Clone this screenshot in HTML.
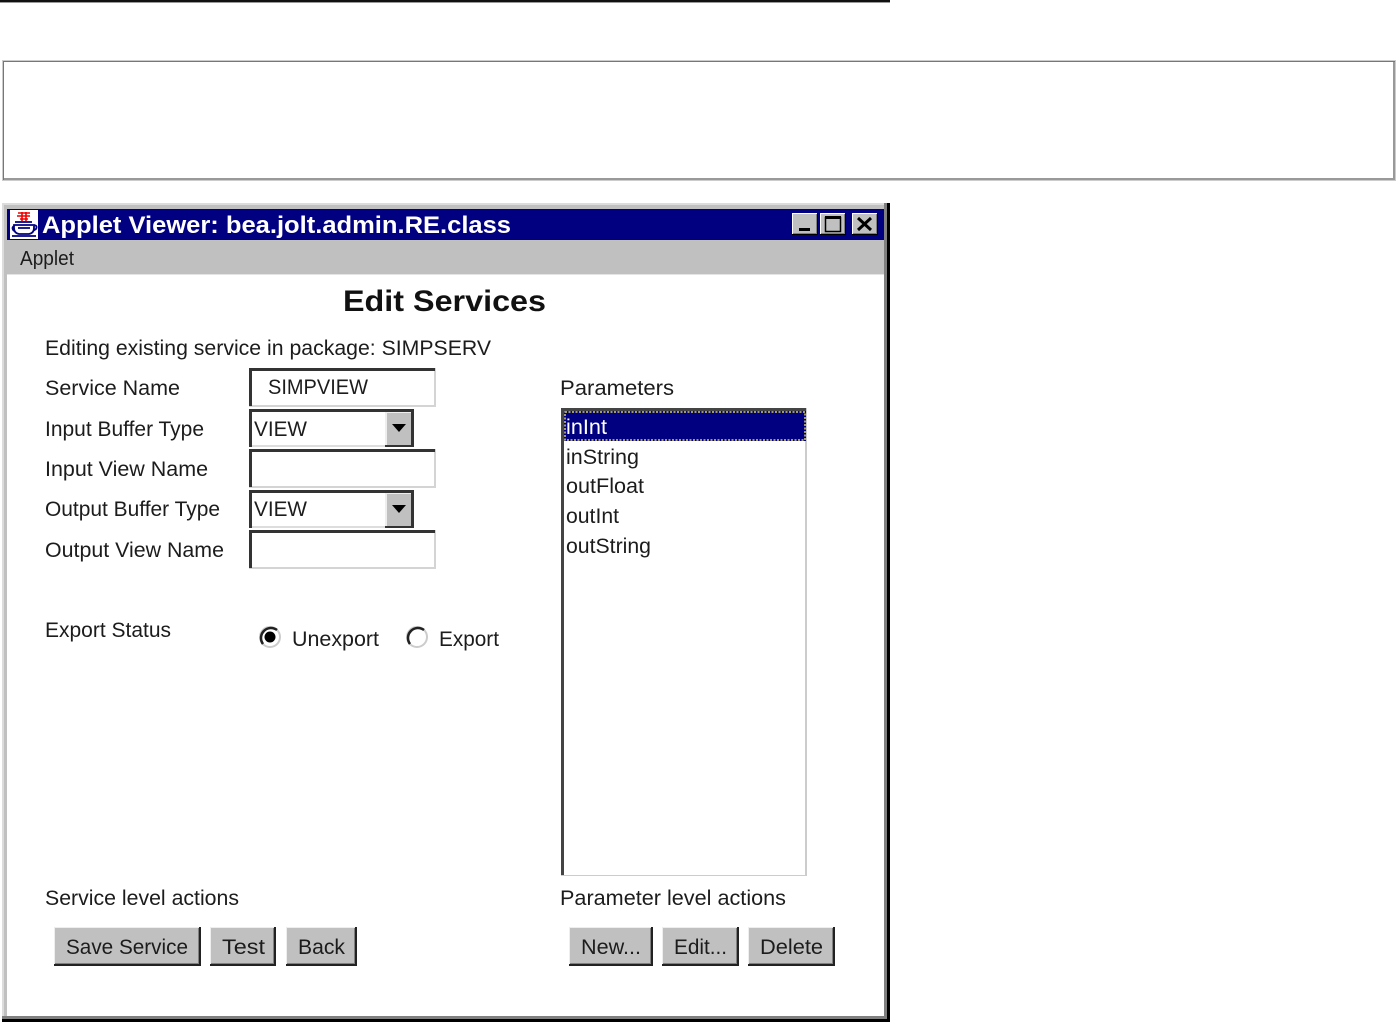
<!DOCTYPE html>
<html>
<head>
<meta charset="utf-8">
<title>Applet Viewer</title>
<style>
html,body{margin:0;padding:0;background:#fff;width:1397px;height:1023px;overflow:hidden}
svg{display:block}
text{font-family:"Liberation Sans",sans-serif;font-size:21px;fill:#1c1c1c}
</style>
</head>
<body>
<svg width="1397" height="1023" viewBox="0 0 1397 1023" xmlns="http://www.w3.org/2000/svg">
<!-- top rule -->
<rect x="0" y="0" width="890" height="2" fill="#111"/>
<rect x="0" y="2" width="890" height="1" fill="#999"/>
<!-- empty box -->
<rect x="2" y="60" width="1394" height="121" fill="#ccc"/>
<rect x="3" y="61" width="1392" height="119" fill="#777"/>
<rect x="4" y="62" width="1390" height="116" fill="#fff"/>
<rect x="1393" y="62" width="2" height="118" fill="#999"/>
<rect x="4" y="178" width="1391" height="2" fill="#999"/>
<!-- window frame -->
<rect x="2" y="203" width="888" height="819" fill="#000"/>
<rect x="2" y="203" width="885" height="816" fill="#808080"/>
<rect x="2" y="203" width="882" height="813" fill="#dcdcdc"/>
<rect x="4" y="205" width="880" height="811" fill="#c0c0c0"/>
<!-- title bar -->
<rect x="7" y="209" width="877" height="31" fill="#000080"/>
<!-- icon -->
<rect x="10" y="210" width="28" height="29" fill="#fff"/>
<path d="M18 213h12M17 216h13M20 219h8M22 212v9M26 212v9" stroke="#e00" stroke-width="1.6" fill="none"/>
<path d="M15 222h17M14 225h20v3q0 5-5 6h-10q-5-1-5-6zM14 226q-3 2 0 5M33 225q5 0 3 4l-3 2M12 236h24M18 228h12" stroke="#000080" stroke-width="1.8" fill="none"/>
<text x="42" y="233" font-weight="bold" style="font-size:24px;fill:#fff" textLength="469" lengthAdjust="spacingAndGlyphs">Applet Viewer: bea.jolt.admin.RE.class</text>
<!-- window buttons -->
<g>
<rect x="792" y="213" width="26" height="22" fill="#000"/>
<rect x="792" y="213" width="25" height="21" fill="#fff"/>
<rect x="793" y="214" width="24" height="20" fill="#808080"/>
<rect x="793" y="214" width="23" height="19" fill="#c0c0c0"/>
<rect x="799" y="228" width="11" height="3" fill="#000"/>
<rect x="820" y="213" width="26" height="22" fill="#000"/>
<rect x="820" y="213" width="25" height="21" fill="#fff"/>
<rect x="821" y="214" width="24" height="20" fill="#808080"/>
<rect x="821" y="214" width="23" height="19" fill="#c0c0c0"/>
<rect x="825.5" y="217.5" width="15" height="14" fill="none" stroke="#000" stroke-width="1.5"/>
<rect x="825" y="216" width="16" height="3" fill="#000"/>
<rect x="852" y="213" width="26" height="22" fill="#000"/>
<rect x="852" y="213" width="25" height="21" fill="#fff"/>
<rect x="853" y="214" width="24" height="20" fill="#808080"/>
<rect x="853" y="214" width="23" height="19" fill="#c0c0c0"/>
<path d="M858 218l13 12M871 218l-13 12" stroke="#000" stroke-width="3" fill="none"/>
</g>
<!-- menu -->
<text x="20" y="265" style="font-size:20px" textLength="54" lengthAdjust="spacingAndGlyphs">Applet</text>
<!-- content -->
<rect x="7" y="275" width="877" height="741" fill="#fff"/>
<rect x="7" y="274" width="877" height="1" fill="#e4e4e4"/>
<text x="343" y="311" font-weight="bold" style="font-size:30px;fill:#111" textLength="203" lengthAdjust="spacingAndGlyphs">Edit Services</text>
<text x="45" y="355" textLength="446" lengthAdjust="spacingAndGlyphs">Editing existing service in package: SIMPSERV</text>
<text x="45" y="395" textLength="135" lengthAdjust="spacingAndGlyphs">Service Name</text>
<text x="45" y="436" textLength="159" lengthAdjust="spacingAndGlyphs">Input Buffer Type</text>
<text x="45" y="476" textLength="163" lengthAdjust="spacingAndGlyphs">Input View Name</text>
<text x="45" y="516" textLength="175" lengthAdjust="spacingAndGlyphs">Output Buffer Type</text>
<text x="45" y="557" textLength="179" lengthAdjust="spacingAndGlyphs">Output View Name</text>
<text x="45" y="637" textLength="126" lengthAdjust="spacingAndGlyphs">Export Status</text>
<text x="560" y="395" textLength="114" lengthAdjust="spacingAndGlyphs">Parameters</text>
<text x="45" y="905" textLength="194" lengthAdjust="spacingAndGlyphs">Service level actions</text>
<text x="560" y="905" textLength="226" lengthAdjust="spacingAndGlyphs">Parameter level actions</text>
<!-- inputs -->
<g>
<rect x="249" y="368" width="187" height="39" fill="#d4d4d4"/>
<rect x="249" y="368" width="186" height="3" fill="#333"/>
<rect x="249" y="368" width="3" height="38" fill="#333"/>
<rect x="252" y="371" width="182" height="34" fill="#fff"/>
<text x="268" y="394" textLength="100" lengthAdjust="spacingAndGlyphs">SIMPVIEW</text>
<rect x="249" y="449" width="187" height="39" fill="#d4d4d4"/>
<rect x="249" y="449" width="186" height="3" fill="#333"/>
<rect x="249" y="449" width="3" height="38" fill="#333"/>
<rect x="252" y="452" width="182" height="34" fill="#fff"/>
<rect x="249" y="530" width="187" height="39" fill="#d4d4d4"/>
<rect x="249" y="530" width="186" height="3" fill="#333"/>
<rect x="249" y="530" width="3" height="38" fill="#333"/>
<rect x="252" y="533" width="182" height="34" fill="#fff"/>
</g>
<!-- combos -->
<g>
<rect x="249" y="409" width="165" height="38" fill="#333"/>
<rect x="252" y="412" width="159" height="33" fill="#fff"/>
<rect x="252" y="445" width="133" height="2" fill="#ddd"/>
<rect x="385" y="412" width="26" height="33" fill="#c0c0c0"/>
<rect x="385" y="412" width="2" height="33" fill="#eee"/>
<rect x="385" y="412" width="26" height="1" fill="#eee"/>
<path d="M392 424h14l-7 8z" fill="#000"/>
<text x="254" y="436" textLength="53" lengthAdjust="spacingAndGlyphs">VIEW</text>
<rect x="249" y="490" width="165" height="38" fill="#333"/>
<rect x="252" y="493" width="159" height="33" fill="#fff"/>
<rect x="252" y="526" width="133" height="2" fill="#ddd"/>
<rect x="385" y="493" width="26" height="33" fill="#c0c0c0"/>
<rect x="385" y="493" width="2" height="33" fill="#eee"/>
<rect x="385" y="493" width="26" height="1" fill="#eee"/>
<path d="M392 505h14l-7 8z" fill="#000"/>
<text x="254" y="516" textLength="53" lengthAdjust="spacingAndGlyphs">VIEW</text>
</g>
<!-- radios -->
<circle cx="270" cy="637" r="10" fill="#fff" stroke="#ccc" stroke-width="2"/>
<path d="M263 644a10 10 0 0 1 14-14" fill="none" stroke="#222" stroke-width="2.5"/>
<circle cx="270" cy="637" r="5.5" fill="#000"/>
<text x="292" y="646" textLength="87" lengthAdjust="spacingAndGlyphs">Unexport</text>
<circle cx="417" cy="637" r="10" fill="#fff" stroke="#ccc" stroke-width="2"/>
<path d="M410 644a10 10 0 0 1 14-14" fill="none" stroke="#222" stroke-width="2.5"/>
<text x="439" y="646" textLength="60" lengthAdjust="spacingAndGlyphs">Export</text>
<!-- list -->
<rect x="561" y="408" width="246" height="468" fill="#ccc"/>
<rect x="561" y="408" width="245" height="3" fill="#444"/>
<rect x="561" y="408" width="3" height="467" fill="#444"/>
<rect x="564" y="411" width="241" height="464" fill="#fff"/>
<rect x="564" y="411" width="242" height="30" fill="#000080"/>
<rect x="565" y="412" width="240" height="28" fill="none" stroke="#d8d060" stroke-width="1.5" stroke-dasharray="2 1.5"/>
<text x="566" y="434" style="fill:#fff" textLength="41" lengthAdjust="spacingAndGlyphs">inInt</text>
<text x="566" y="464" textLength="73" lengthAdjust="spacingAndGlyphs">inString</text>
<text x="566" y="493" textLength="78" lengthAdjust="spacingAndGlyphs">outFloat</text>
<text x="566" y="523" textLength="53" lengthAdjust="spacingAndGlyphs">outInt</text>
<text x="566" y="553" textLength="85" lengthAdjust="spacingAndGlyphs">outString</text>
<!-- buttons -->
<g>
<rect x="54" y="927" width="147" height="39" fill="#222"/>
<rect x="54" y="927" width="145" height="37" fill="#eee"/>
<rect x="55" y="928" width="144" height="36" fill="#808080"/>
<rect x="55" y="928" width="143" height="35" fill="#c0c0c0"/>
<text x="66" y="954" textLength="122" lengthAdjust="spacingAndGlyphs">Save Service</text>
<rect x="210" y="927" width="66" height="39" fill="#222"/>
<rect x="210" y="927" width="64" height="37" fill="#eee"/>
<rect x="211" y="928" width="63" height="36" fill="#808080"/>
<rect x="211" y="928" width="62" height="35" fill="#c0c0c0"/>
<text x="222" y="954" textLength="43" lengthAdjust="spacingAndGlyphs">Test</text>
<rect x="286" y="927" width="71" height="39" fill="#222"/>
<rect x="286" y="927" width="69" height="37" fill="#eee"/>
<rect x="287" y="928" width="68" height="36" fill="#808080"/>
<rect x="287" y="928" width="67" height="35" fill="#c0c0c0"/>
<text x="298" y="954" textLength="47" lengthAdjust="spacingAndGlyphs">Back</text>
<rect x="569" y="927" width="84" height="39" fill="#222"/>
<rect x="569" y="927" width="82" height="37" fill="#eee"/>
<rect x="570" y="928" width="81" height="36" fill="#808080"/>
<rect x="570" y="928" width="80" height="35" fill="#c0c0c0"/>
<text x="581" y="954" textLength="60" lengthAdjust="spacingAndGlyphs">New...</text>
<rect x="662" y="927" width="77" height="39" fill="#222"/>
<rect x="662" y="927" width="75" height="37" fill="#eee"/>
<rect x="663" y="928" width="74" height="36" fill="#808080"/>
<rect x="663" y="928" width="73" height="35" fill="#c0c0c0"/>
<text x="674" y="954" textLength="53" lengthAdjust="spacingAndGlyphs">Edit...</text>
<rect x="748" y="927" width="87" height="39" fill="#222"/>
<rect x="748" y="927" width="85" height="37" fill="#eee"/>
<rect x="749" y="928" width="84" height="36" fill="#808080"/>
<rect x="749" y="928" width="83" height="35" fill="#c0c0c0"/>
<text x="760" y="954" textLength="63" lengthAdjust="spacingAndGlyphs">Delete</text>
</g>
</svg>
</body>
</html>
